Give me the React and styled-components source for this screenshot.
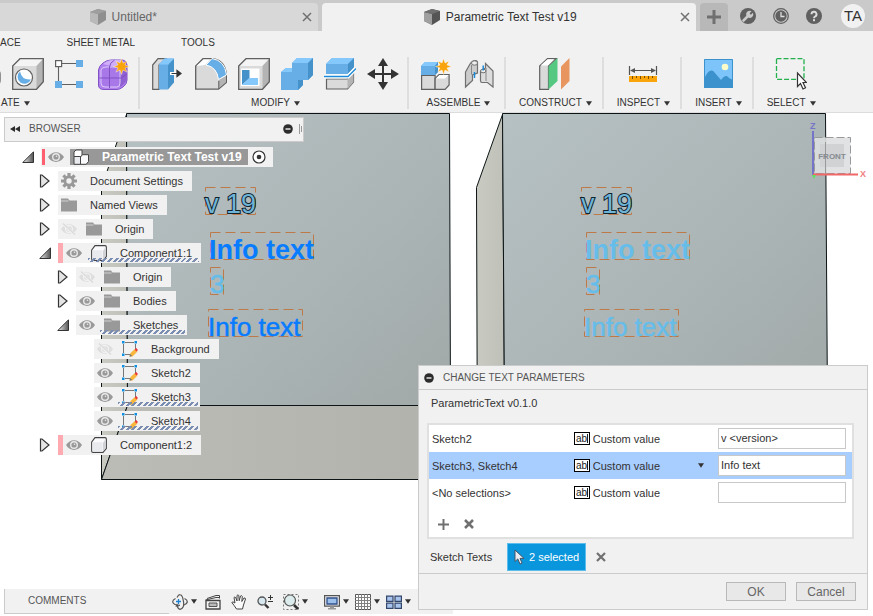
import React from "react";
import styled, { createGlobalStyle } from "styled-components";

const GlobalStyle = createGlobalStyle`
  * { box-sizing: border-box; }
  body {
    margin: 0;
    background: #fff;
    color: #333;
    font-family: "Liberation Sans", Arial, sans-serif;
    font-size: 11px;
    line-height: 16px;
  }
  button, input, select { font: inherit; color: inherit; margin: 0; }
  svg { display: block; flex: none; }
`;

const PlainButton = styled.button`
  display: flex;
  align-items: center;
  justify-content: center;
  padding: 0;
  border: 0;
  background: none;
`;

const Page = styled.div`
  display: flex;
  flex-direction: column;
  min-height: 100vh;
  overflow: hidden;
`;

/* ---------- document tabs ---------- */

const TabBar = styled.header`
  display: flex;
  align-items: stretch;
  height: 31px;
  padding-top: 3px;
  background: #cacaca;
`;

const DocTab = styled.div`
  display: flex;
  align-items: center;
  flex: ${(p) => (p.$active ? "374 1 0" : "318 1 0")};
  min-width: 0;
  margin-right: 4px;
  padding-right: 6px;
  border-radius: ${(p) => (p.$active ? "4px 4px 0 0" : "0 4px 0 0")};
  background: ${(p) => (p.$active ? "#f1f1f1" : "#d8d8d8")};
  color: ${(p) => (p.$active ? "#333" : "#666")};
  font-size: 12px;
`;

const DocTitle = styled.span`
  display: flex;
  flex: 1;
  align-items: center;
  justify-content: center;
  gap: 6px;
  min-width: 0;
  padding-right: ${(p) => (p.$active ? "2px" : "56px")};
  white-space: nowrap;
`;

const AddTab = styled(PlainButton)`
  width: 28px;
  border-radius: 4px 4px 0 0;
  background: #b8b8b8;
`;

const HeaderTools = styled.div`
  display: flex;
  align-items: center;
  gap: 17px;
  height: 25px;
  padding: 0 8px 0 12px;
`;

const Avatar = styled(PlainButton)`
  width: 24px;
  height: 24px;
  margin-left: 2px;
  border-radius: 50%;
  background: #f1f1f1;
  font-size: 15px;
`;

/* ---------- ribbon ---------- */

const Ribbon = styled.section`
  height: 82px;
  background: #f1f1f1;
  border-bottom: 1px solid #dcdcdc;
`;

const RibbonTabs = styled.nav`
  display: flex;
  gap: 46px;
  height: 23px;
`;

const RibbonTab = styled(PlainButton)`
  font-size: 10px;
  white-space: nowrap;
`;

const Groups = styled.div`
  display: flex;
  height: 55px;
  padding-top: 3px;
  margin-left: -43px;
`;

const Group = styled.div`
  display: flex;
  flex: none;
  flex-direction: column;
  align-items: center;
  padding: 1px ${(p) => (p.$single ? "10px 0 13px" : "8px 0 12px")};
  border-right: ${(p) => (p.$last ? "0" : "2px solid #dedede")};
`;

const Tools = styled.div`
  display: flex;
  gap: 11px;
`;

const GroupMenu = styled(PlainButton)`
  gap: 4px;
  height: 14px;
  margin-top: 6px;
  align-self: ${(p) => (p.$first ? "flex-start" : "center")};
  padding-left: ${(p) => (p.$first ? "32px" : "0")};
  font-size: 10px;
  line-height: 14px;
`;

/* ---------- workspace ---------- */

const Workspace = styled.main`
  position: relative;
  display: flex;
  flex: 1;
  flex-direction: column;
  justify-content: space-between;
`;

const SceneLayer = styled.div`
  position: absolute;
  inset: 0;
  overflow: hidden;
`;

const CubeLayer = styled.div`
  position: absolute;
  top: 7px;
  right: 4px;
`;

const Browser = styled.aside`
  position: relative;
  width: 300px;
  margin: 4px 0 0 4px;
`;

const BrowserHead = styled.div`
  display: flex;
  align-items: center;
  height: 25px;
  padding: 0 0 2px 5px;
  border: 1px solid #cbcbcb;
  background: #f1f1f1;
  color: #555;
  font-size: 10px;
`;

const HeadTitle = styled.span`
  flex: 1;
  margin-left: 9px;
`;

const GripSlot = styled.span`
  margin-left: 6px;
`;

const Tree = styled.ul`
  margin: 3px 0 0;
  padding: 0;
  list-style: none;
`;

const TreeRow = styled.li`
  display: flex;
  align-items: center;
  height: 24px;
  padding-left: ${(p) => 15 + p.$depth * 18 - (p.$depth > 0 ? 1 : 0)}px;
`;

const Toggle = styled(PlainButton)`
  width: 22px;
  flex: none;
  justify-content: flex-start;
  padding-left: 3px;
`;

const Pill = styled.div`
  position: relative;
  display: flex;
  align-items: center;
  height: 20px;
  padding: 0 ${(p) => (p.$root ? 7 : 9)}px 0 ${(p) => (p.$strip ? 0 : 3)}px;
  background: #f1f1f1;
  white-space: nowrap;
`;

const Strip = styled.span`
  width: ${(p) => (p.$strong ? 3 : 5)}px;
  height: ${(p) => (p.$strong ? 16 : 20)}px;
  margin: 0 ${(p) => (p.$strong ? "3px 0 1px" : "3px 0 0")};
  background: ${(p) => (p.$strong ? "#ff6070" : "#ffaab0")};
`;

const NodeIcon = styled.span`
  margin-left: ${(p) => (p.$first ? 0 : 9)}px;
`;

const NodeName = styled.span`
  margin-left: 13px;
`;

const RootLabel = styled.span`
  display: flex;
  align-items: center;
  gap: 13px;
  height: 16px;
  margin: 0 4px 0 6px;
  padding: 0 6px 0 3px;
  background: #989898;
  color: #fff;
  font-size: 12px;
  font-weight: bold;
`;

const Hatch = styled.span`
  position: absolute;
  right: 2px;
  bottom: 1px;
  left: ${(p) => p.$left}px;
  height: 4px;
  background: repeating-linear-gradient(135deg, #7c8db2 0 2px, transparent 2px 4px);
`;

/* ---------- bottom bar ---------- */

const BottomBar = styled.footer`
  position: relative;
  display: flex;
  width: 449px;
  height: 25px;
  margin: 0 0 2px 4px;
  background: #f1f1f1;
`;

const Comments = styled(PlainButton)`
  width: 165px;
  padding: 0 0 1px 23px;
  justify-content: flex-start;
  border: 1px solid #cbcbcb;
  border-width: 0 0 1px 1px;
  color: #555;
  font-size: 10px;
`;

const NavTools = styled.div`
  display: flex;
  align-items: center;
  padding-left: 3px;
`;

const NavTool = styled(PlainButton)`
  width: ${(p) => p.$width}px;
  gap: 3px;
  justify-content: flex-start;
`;

/* ---------- dialog ---------- */

const Dialog = styled.form`
  position: absolute;
  right: 5px;
  bottom: 6px;
  width: 450px;
  border: 1px solid #cbcbcb;
  background: #f1f1f1;
`;

const DialogHead = styled.div`
  display: flex;
  align-items: center;
  gap: 9px;
  height: 24px;
  padding-left: 5px;
  border-bottom: 1px solid #cbcbcb;
  color: #555;
  font-size: 10px;
`;

const DialogText = styled.p`
  margin: 0;
  padding: 5px 12px 12px;
`;

const Frame = styled.div`
  margin: 0 13px 0 8px;
  border: 2px solid #e0e0e0;
  background: #fff;
`;

const Params = styled.table`
  width: 100%;
  border-collapse: collapse;
  table-layout: fixed;
`;

const ParamRow = styled.tr`
  height: 27px;
  background: ${(p) => (p.$selected ? "#a8cdff" : "#fff")};
`;

const Cell = styled.td`
  width: ${(p) => p.$width};
  padding: 0 ${(p) => p.$right || 0}px 0 ${(p) => p.$left || 0}px;
`;

const TypeField = styled.label`
  display: flex;
  align-items: center;
  gap: 3px;
`;

const TypeSelect = styled.select`
  flex: 1;
  min-width: 0;
  padding: 0;
  border: 0;
  background: none;
  appearance: none;
`;

const ValueInput = styled.input`
  display: block;
  width: 100%;
  height: 21px;
  padding: 0 2px 2px;
  border: 1px solid #c8c8c8;
  border-radius: 0;
  background: #fff;
`;

const RowActions = styled.div`
  display: flex;
  align-items: center;
  gap: 15px;
  height: 31px;
  padding: 5px 9px 0;
`;

const SelectionLine = styled.div`
  display: flex;
  align-items: center;
  height: 34px;
  padding: 1px 11px 0;
`;

const SelectionLabel = styled.span`
  width: 77px;
`;

const Selection = styled(PlainButton)`
  gap: 4px;
  height: 28px;
  margin-right: 10px;
  padding: 0 6px;
  border: 1px solid #5cbcec;
  background: #0a96dc;
  color: #fff;
`;

const DialogFoot = styled.div`
  display: flex;
  justify-content: flex-end;
  gap: 10px;
  padding: 8px 11px;
  border-top: 1px solid #cbcbcb;
`;

const FootButton = styled.button`
  width: 60px;
  height: 19px;
  padding: 0;
  border: 1px solid #b9b9b9;
  background: #e8e8e8;
  color: #666;
  font-size: 12px;
  line-height: 16px;
`;

/* ---------- small icons ---------- */

const Caret = ({ size = 7 }) => (
  <svg width={size} height="5" viewBox="0 0 7 5"><path d="M0 0h7L3.500 5z" fill="#333" /></svg>
);

const DocIcon = ({ dim }) => (
  <svg width="16" height="16" viewBox="0 0 16 16" opacity={dim ? 0.55 : 1}>
    <path d="M0 3 8 0l8 2v9l-8 5-8-4z" fill="#555" />
    <path d="M0 3 8 5v11l-8-4z" fill="#a0a0a0" />
    <path d="M0 3 8 0l8 2-8 3z" fill="#707070" />
  </svg>
);

const Cross = ({ size = 10, width = 1.5, color = "#707070" }) => (
  <svg width={size} height={size} viewBox="0 0 10 10">
    <path d="M1 1 9 9M9 1 1 9" stroke={color} strokeWidth={width} fill="none" />
  </svg>
);

const Plus = ({ size = 14, width = 3, color = "#707070" }) => (
  <svg width={size} height={size} viewBox="0 0 14 14">
    <path d="M7 0v14M0 7h14" stroke={color} strokeWidth={width} />
  </svg>
);

const Wrench = () => (
  <svg width="16" height="16" viewBox="0 0 16 16">
    <circle cx="8" cy="8" r="8" fill="#606060" />
    <path d="M3.500 12.500 8 8" stroke="#cacaca" strokeWidth="2.600" strokeLinecap="round" />
    <path d="M11.600 3.300 9.800 5.100l.2 1.200 1.200.2 1.700-1.800A3.600 3.600 0 1 1 11.600 3.300z" fill="#cacaca" />
  </svg>
);

const Clock = () => (
  <svg width="16" height="16" viewBox="0 0 16 16">
    <circle cx="8" cy="8" r="7.300" fill="none" stroke="#606060" strokeWidth="1.300" />
    <circle cx="8" cy="8" r="5.700" fill="#606060" />
    <path d="M8 4v4.500h3.500" stroke="#ddd" strokeWidth="1.300" fill="none" />
  </svg>
);

const Help = () => (
  <svg width="16" height="16" viewBox="0 0 16 16">
    <circle cx="8" cy="8" r="8" fill="#606060" />
    <path d="M5.500 6.300a2.500 2.500 0 1 1 3.600 2.200C8.200 9 8 9.200 8 10.200" stroke="#ddd" strokeWidth="1.900" fill="none" />
    <rect x="7" y="11.200" width="2" height="2" fill="#ddd" />
  </svg>
);

const Minus = ({ size = 10 }) => (
  <svg width={size} height={size} viewBox="0 0 10 10">
    <circle cx="5" cy="5" r="4.800" fill="#2c2c2c" />
    <path d="M2.500 5h5" stroke="#fff" strokeWidth="1.300" />
  </svg>
);

const Rewind = () => (
  <svg width="10" height="6" viewBox="0 0 10 6"><path d="M5 0v6L0 3zM10 0v6L5 3z" fill="#2c2c2c" /></svg>
);

const Grip = () => (
  <svg width="4" height="10" viewBox="0 0 4 10"><path d="M.5 0v10M2.500 2v6" stroke="#999" /></svg>
);

const Closed = () => (
  <svg width="11" height="14" viewBox="0 0 11 14">
    <path d="M1.500 1h1.500l7 6-7 6H1.500z" fill="#e4e4e4" stroke="#333" strokeWidth="1.200" />
  </svg>
);

const Opened = () => (
  <svg width="12" height="12" viewBox="0 0 12 12">
    <defs><linearGradient id="opened"><stop offset="0" stopColor="#eee" /><stop offset="1" stopColor="#555" /></linearGradient></defs>
    <path d="M11.500.8v10.700H.8z" fill="url(#opened)" stroke="#333" />
  </svg>
);

const Eye = () => (
  <svg width="16" height="16" viewBox="0 0 16 16">
    <path d="M0 8c4-6.500 12-6.500 16 0-4 6.500-12 6.500-16 0z" fill="#999" />
    <circle cx="8" cy="8" r="3.300" fill="none" stroke="#e8e8e8" strokeWidth="1.400" />
    <circle cx="8.500" cy="7.300" r=".8" fill="#e8e8e8" />
  </svg>
);

const EyeOff = () => (
  <svg width="16" height="16" viewBox="0 0 16 16">
    <path d="M0 8c4-6.500 12-6.500 16 0-4 6.500-12 6.500-16 0z" fill="#dedede" />
    <circle cx="8" cy="8" r="3.500" fill="none" stroke="#f1f1f1" strokeWidth="1.300" />
    <path d="M2 2.500 14 14.500" stroke="#f1f1f1" strokeWidth="3" />
    <path d="M2 2.500 14 13.500" stroke="#dadada" strokeWidth="1.400" />
  </svg>
);

const Folder = () => (
  <svg width="16" height="16" viewBox="0 0 16 16">
    <path d="M0 1.500h7l1.500 2H16v11H0z" fill="#999" />
    <path d="M0 4h7.500" stroke="#d0d0d0" />
  </svg>
);

const Gear = () => (
  <svg width="16" height="16" viewBox="0 0 16 16">
    <g stroke="#999" strokeWidth="3.200">
      <path d="M8 0v16M0 8h16M2.400 2.400l11.200 11.200M13.600 2.400 2.400 13.600" />
    </g>
    <circle cx="8" cy="8" r="5.500" fill="#999" />
    <circle cx="8" cy="8" r="2.700" fill="#f1f1f1" />
  </svg>
);

const Body = () => (
  <svg width="16" height="16" viewBox="0 0 16 16">
    <path d="M.7 5 4 .7h10q1.300 0 1.300 1.300v9.500L12 15.300H2Q.7 15.300.7 14z" fill="#fafafc" stroke="#444" strokeWidth="1.200" />
    <path d="M1.300 5.200H10.500q1 0 1 1v8.500H2.300q-1 0-1-1z" fill="#e8eaee" />
    <path d="M12 6l3-4.500v9.500l-3 3.500z" fill="#d0d2d6" />
  </svg>
);

const Assembly = () => (
  <svg width="16" height="16" viewBox="0 0 16 16">
    <path d="M1 3 3 1h6v5.500l-1 1H1z" fill="#fff" stroke="#444" />
    <path d="M1 7.500h6.500v7.800H1z" fill="#e8eaee" stroke="#444" />
    <path d="M7.500 8l2-2.300h6v6.800l-2.300 2.800H7.500z" fill="#fafafc" stroke="#444" />
  </svg>
);

const Sketch = () => (
  <svg width="16" height="16" viewBox="0 0 16 16">
    <path d="M3 1.500h9M1.500 3v9M13.500 3v6M3 13.500h5" stroke="#777" />
    <path d="M0 0h2.500v2.500H0zM12.500 0H15v2.500h-2.500zM0 12.500h2.500V15H0z" fill="#0e8fdf" />
    <path d="M7.500 15.500 8.500 12l4.500-4 2.500 2.500-5 5z" fill="#f8b63c" />
    <path d="M12.700 8.500 14.300 7 16 9l-1.700 1.500z" fill="#ef3742" />
    <path d="M7.500 15.700 8.200 13l2 2z" fill="#777" />
  </svg>
);

const Radio = () => (
  <svg width="14" height="14" viewBox="0 0 14 14">
    <circle cx="7" cy="7" r="6" fill="#fff" stroke="#333" strokeWidth="1.200" />
    <circle cx="7" cy="7" r="2.300" fill="#333" />
  </svg>
);

const TextBoxIcon = () => (
  <svg width="16" height="13" viewBox="0 0 16 13">
    <rect x=".5" y=".5" width="15" height="12" fill="#fff" stroke="#000" />
    <text x="2" y="10" fontSize="10" fill="#222">ab</text>
    <path d="M13.500 2v9" stroke="#222" />
  </svg>
);

const Pointer = () => (
  <svg width="11" height="16" viewBox="0 0 11 16">
    <path d="M1 1v11.500l2.800-2.600L6 15l2-.9-2-4.700h4z" fill="#e8eef4" stroke="#456" />
  </svg>
);

/* ---------- ribbon icons ---------- */

const G = "#dadada";
const L = "#f4f4f4";
const D = "#b4b4b4";
const S = "#606060";
const B = "#67aee6";
const BL = "#85c8fc";
const BD = "#4592cb";

const R = ({ children }) => <svg width="32" height="32" viewBox="0 0 32 32">{children}</svg>;

const Block = () => (
  <>
    <path d="M.7 8 8 .7h23.300v23L24.500 31.300H.7z" fill={G} />
    <path d="M.7 8 8 .7h23.300L24.500 8z" fill={L} />
    <path d="M24.500 8l6.800-7.300v23l-6.800 7.600z" fill={D} />
    <path d="M.7 8 8 .7h23.300v23L24.500 31.300H.7z" fill="none" stroke={S} strokeWidth="1.300" />
  </>
);

const Star = ({ x, y }) => (
  <path
    transform={`translate(${x} ${y})`}
    d="M0-8 1.600-3.400 5.600-5.600 3.500-1.500 8 0 3.500 1.500 5.600 5.600 1.500 3.500 0 8-1.500 3.500-5.600 5.600-3.500 1.500-8 0-3.500-1.500-5.600-5.600-1.500-3.500z"
    fill="#f9a40a" stroke="#fff" strokeWidth=".4"
  />
);

const HoleIcon = () => (
  <R>
    <Block />
    <circle cx="12" cy="19.500" r="8.500" fill="#fff" stroke={S} strokeWidth="1.200" />
    <path d="M8 13.500a7 7 0 1 0 11 8Q10 22.500 8 13.500z" fill={B} />
  </R>
);
const ExtrudeIcon = () => (
  <R>
    <path d="M0 12h27q4 0 4 4v6q0 5-4 5H0z" fill={D} stroke={S} strokeWidth="1.300" />
  </R>
);
const PatternIcon = () => (
  <R>
    <path d="M7 5.500h14M3.500 9v14M7 26.500h14" stroke={S} strokeWidth="1.100" />
    <rect x=".6" y="2.600" width="6" height="6" fill="#fff" stroke={S} strokeWidth="1.200" />
    <path d="M21 2h7v7h-7zM0 23h7v7H0zM21 23h7v7h-7z" fill={B} />
  </R>
);
const FormIcon = () => (
  <R>
    <path d="M.5 12Q1 8 5 5t8-3h12q4 1 4 5v15q0 4-4 7t-7 2.500H6Q.5 31.500.5 27z" fill="#b182ee" stroke="#8150c4" />
    <path d="M5 6q5-4 9-4h10q-2 5-9 6.500z" fill="#cfaef8" />
    <path d="M22 10q5-1 7-5v16q-2 5-7 8z" fill="#8f60d2" />
    <path d="M3 12q1-3 5-3h11q3 0 3 4v12q0 4-3 4H7q-4 0-4-4z" fill="#a878e8" stroke="#dcc8fa" />
    <path d="M11.500 9v21M1.500 20H23l6-4M11.500 9q0-4 5-7" stroke="#8150c4" fill="none" />
    <Star x={23.500} y={8.500} />
  </R>
);
const PressPullIcon = () => (
  <R>
    <path d="M.7 7 6 .7h8L7 7v24.300H.7z" fill={G} stroke={S} strokeWidth="1.200" />
    <path d="M7 6.500 12.500.5H22L16 6.500v25H7z" fill={B} />
    <path d="M16 6.500 22 .5v24l-6 7z" fill={BD} />
    <path d="M7 6.500 12.500.5H22L16 6.500z" fill={BL} />
    <path d="M18 15.500h9" stroke="#fff" strokeWidth="3" />
    <path d="M19.500 15.500H26M25 12.500l4 3-4 3z" stroke="#333" strokeWidth="1.200" fill="#333" />
  </R>
);
const FilletIcon = () => (
  <R>
    <path d="M.7 8 8 .7H18q13 2 13.500 18v5.500l-8 7H.7z" fill={G} stroke={S} strokeWidth="1.300" />
    <path d="M1.500 8 8.500 1.500H15L10 7z" fill="#fff" />
    <path d="M23.500 22l7.500-4v6l-7.500 6.500z" fill={D} />
    <path d="M11 7 17 .5q13 2 14.500 16.500l-8 4.500Q22 9 11 7z" fill={B} stroke="#fff" />
    <path d="M23.800 23v8" fill="none" stroke={S} />
  </R>
);
const ShellIcon = () => (
  <R>
    <Block />
    <path d="M3 10.500h18.500v17.500H3z" fill="#fff" />
    <path d="M4 12h7.500v8L4 27z" fill={BD} />
    <path d="M4 27l7.500-7H20v7z" fill={BL} />
  </R>
);
const CombineIcon = () => (
  <R>
    <path d="M0 14 5 10h6V5l5-5h16v17l-5 5h-5v5l-5 5H0z" fill={B} />
    <path d="M11 5l5-5h16l-5 5zM0 14l5-4h6v4z" fill={BL} />
    <path d="M27 5l5-5v17l-5 5zM17 22h5v5l-5 5z" fill={BD} />
  </R>
);
const SplitIcon = () => (
  <R>
    <path d="M2 6 8 0h22v9l-6 7H2z" fill={B} />
    <path d="M2 6 8 0h22l-6 6z" fill={BL} />
    <path d="M24 6l6-6v9l-6 7z" fill={BD} />
    <path d="M2.500 21h21l6-7v10l-6 7h-21z" fill={G} stroke={S} strokeWidth="1.200" />
    <path d="M23.500 21l6-6v9l-6 7z" fill={D} />
    <path d="M0 18.500h24l8-8" stroke="#fff" strokeWidth="4" fill="none" />
    <path d="M0 18.500h24l8-8" stroke="#1c8ad8" strokeWidth="1.300" fill="none" />
  </R>
);
const MoveIcon = () => (
  <R>
    <path d="M16 4v24M4 16h24" stroke="#333" strokeWidth="2" />
    <path d="M16 0l5 8H11zM16 32l5-8H11zM0 16l8-5v10zM32 16l-8-5v10z" fill="#333" />
  </R>
);
const NewComponentIcon = () => (
  <R>
    <path d="M0 8l4-4h13v10l-3 3H0z" fill={B} />
    <path d="M0 8l4-4h13l-3 4z" fill={BL} />
    <path d="M14 8l3-4v10l-3 3z" fill={BD} />
    <path d="M.6 17.500h13.500v13.800H.6z" fill={G} stroke={S} strokeWidth="1.200" />
    <path d="M14.100 20.500l4-4h10v10.500l-4 4.300h-10z" fill={G} stroke={S} strokeWidth="1.200" />
    <path d="M14.800 20.500l3.700-3.500h9l-3.500 3.500z" fill="#fff" />
    <Star x={22.500} y={8.500} />
  </R>
);
const JointIcon = () => (
  <R>
    <path d="M1.500 14 6 6q2-3.500 5.500-3.500 2 0 2 2V15l-5 2v5.500l-7 6.500z" fill="#ccc" stroke="#707070" strokeWidth="1.200" />
    <path d="M7.500 7v9.500" stroke="#888" fill="none" />
    <ellipse cx="10.500" cy="5" rx="3" ry="2.200" fill="#eee" stroke="#707070" />
    <path d="M29 29 23.500 24.500H18q-1.500 0-1.500-2V13l5-3V5.500L29 13z" fill="#ddd" stroke="#707070" strokeWidth="1.200" />
    <path d="M22 10v13" stroke="#888" />
    <ellipse cx="19.200" cy="13" rx="2.700" ry="1.800" fill="#eee" stroke="#707070" />
    <path d="M10.500 14v6M19.200 7.500v5" stroke="#1c8ad8" strokeWidth="1.500" />
  </R>
);
const PlaneIcon = () => (
  <R>
    <path d="M.7 8 8.500.7h8.800L9.500 8v23.300H.7z" fill={G} stroke={S} strokeWidth="1.200" />
    <path d="M1.500 7.500 8.500 1.300H15L9 7.500z" fill="#fff" />
    <path d="M9.500 8.500 18.500 0v23l-9 8.500z" fill="#55c882" />
    <path d="M22 8.500 30.500 0v23L22 31.500z" fill="#e8955f" />
  </R>
);
const MeasureIcon = () => (
  <R>
    <path d="M2.500 8v9M29.500 8v9M4 12.500h24" stroke="#555" strokeWidth="1.200" />
    <path d="M3 12.500l5-2.500v5zM29 12.500l-5-2.500v5z" fill="#555" />
    <path d="M2 18h28v6H2z" fill="#f9a40a" />
    <path d="M5.500 18v3M9.500 18v2M13.500 18v3M17.500 18v2M21.500 18v3M25.500 18v2" stroke="#7a5000" />
  </R>
);
const ImageIcon = () => (
  <R>
    <path d="M2 1h29v29H2z" fill="#7cc4fa" />
    <circle cx="23" cy="9" r="3.300" fill="#fdfcc8" />
    <path d="M2 21Q8 8 13 15l6 7q5-7 8-2l4 2v8H2z" fill="#3c92cc" />
    <path d="M2.500 1.500h28v28h-28z" fill="none" stroke="#3c92cc" />
  </R>
);
const SelectIcon = () => (
  <R>
    <path d="M1.500.7H29v20.600H1.500z" fill="none" stroke="#22b14c" strokeWidth="1.300" strokeDasharray="5 2" />
    <path d="M22.500 15v13.500l3-3 2.500 5.500 2.500-1.200-2.500-5.300h3.500z" fill="#fff" stroke="#333" strokeWidth="1.200" />
  </R>
);

/* ---------- navigation icons ---------- */

const N = ({ children }) => <svg width="16" height="16" viewBox="0 0 16 16">{children}</svg>;

const Orbit = () => (
  <N>
    <path d="M3.500 4.500Q.5 6 .7 8q.5 3 7.300 3.300M12.500 4.500q3 1.500 2.800 3.500-.6 2.300-3.300 3" fill="none" stroke="#555" strokeWidth="1.200" />
    <path d="M5 3.500Q6.500.6 8 .7q2.500 0 3.500 7T8 15.300Q6 15 5 11.500" fill="none" stroke="#555" strokeWidth="1.200" />
    <path d="M3.300 12.500 5 9.500l2 3z" fill="#555" />
    <path d="M6.500 5v5M4 7.500h5" stroke="#1c7fd0" strokeWidth="1.300" />
  </N>
);
const LookAt = () => (
  <N>
    <path d="M1 6.500h14v8.500H1z" fill="#f4f4f4" stroke="#444" strokeWidth="1.300" />
    <path d="M4 9h8v3.500H4z" fill="#bbb" stroke="#555" />
    <path d="M.5 6 11 3.500H14M2 4.500 11 1.500h3.500v3" stroke="#444" fill="none" />
  </N>
);
const Hand = () => (
  <N>
    <path d="M5.500 15Q3 11 .8 8.500 1.500 7 4 9L3 3.500q1-1.300 1.800.3L6 7V1.500q1-1.300 1.800 0l.4 5.200L9.500 2q1.300-1 1.800.4L10.800 7.500 13 4q1.300-.4 1.500 1L12.500 11 11.500 15z" fill="#fafafa" stroke="#444" />
  </N>
);
const Zoom = () => (
  <N>
    <circle cx="5" cy="7" r="4" fill="#d8e8f0" stroke="#555" strokeWidth="1.300" />
    <path d="M8 10.500l3.500 3.500" stroke="#333" strokeWidth="2.400" />
    <path d="M13.500 1v5M11 3.500h5M11 7.500h5" stroke="#333" />
  </N>
);
const ZoomWindow = () => (
  <N>
    <path d="M.5.500h15v15H.500z" fill="none" stroke="#777" strokeDasharray="2 2" />
    <circle cx="7" cy="6.500" r="5.500" fill="#dcecec" stroke="#555" strokeWidth="1.200" />
    <path d="M11 11l4 4" stroke="#333" strokeWidth="2.600" />
  </N>
);
const Display = () => (
  <N>
    <path d="M.6 1.600h14.800v10.500H.6z" fill="#eee" stroke="#555" strokeWidth="1.200" />
    <path d="M3 4h10v6H3z" fill="#9cc0ea" stroke="#2f4f8c" strokeWidth="1.300" />
    <path d="M6 12.500h4v1.500H6zM4 14h8v1.500H4z" fill="#999" />
  </N>
);
const Grid = () => (
  <N>
    <path d="M.5.500h15v15H.500z" fill="#fff" stroke="#555" />
    <path d="M3.500 0v16M6.500 0v16M9.500 0v16M12.500 0v16M0 3.500h16M0 6.500h16M0 9.500h16M0 12.500h16" stroke="#808080" />
  </N>
);
const Views = () => (
  <N>
    <path d="M.6 2.100h6.400v5.300H.6zM9 2.100h6.400v5.300H9zM.6 9.100h6.400v5.300H.6zM9 9.100h6.400v5.300H9z" fill="#a8c4ec" stroke="#33466c" strokeWidth="1.200" />
  </N>
);

/* ---------- 3D scene ---------- */

const SketchSet = ({ x, selected }) => {
  const color = selected ? "#087cff" : "#66bde9";
  return (
    <g transform={`translate(${x} 0)`} fontFamily="Liberation Sans, Arial, sans-serif">
      <g fill="none" stroke="#bd7a48" strokeDasharray="10 5">
        <path d="M205.500 187.500h50v27h-50zM210.500 232.500h103v27h-103zM210.500 267.500h13v27h-13zM208.500 309.500h94v27h-94z" />
      </g>
      <text x="205" y="213" fontSize="27" fill="#6fb4d6" stroke="#10222c" strokeWidth="2" paintOrder="stroke">v 19</text>
      <text x="209" y="259" fontSize="27" fontWeight="bold" fill={color}>Info text</text>
      <text x="210" y="293" fontSize="26" fill="#66bde9" stroke="#66bde9" strokeWidth=".5">3</text>
      <text x="208" y="336" fontSize="26" fill={color} stroke={color} strokeWidth=".5">Info text</text>
    </g>
  );
};

const Scene = () => (
  <svg width="100%" height="100%" viewBox="0 113 873 503" preserveAspectRatio="xMinYMin slice">
    <defs>
      <linearGradient id="face" x1="0" y1="0" x2="1" y2="1">
        <stop offset="0" stopColor="#b6c1c3" />
        <stop offset=".6" stopColor="#abb4b5" />
        <stop offset="1" stopColor="#a0a9a7" />
      </linearGradient>
      <linearGradient id="side"><stop offset="0" stopColor="#c9cac1" /><stop offset="1" stopColor="#bfc1b8" /></linearGradient>
      <linearGradient id="under"><stop offset="0" stopColor="#bbbcb6" /><stop offset="1" stopColor="#b1b2ab" /></linearGradient>
    </defs>
    <g stroke="#0c1416">
      <path d="M126.500 114.500 101.500 187.500V479.500L127.500 405.500z" fill="url(#side)" />
      <path d="M101.500 479.500 127.500 405.500H450.500V479.500z" fill="url(#under)" />
      <path d="M126.500 113.500H449.500L450.500 405.500H127.500z" fill="url(#face)" />
      <path d="M502.500 114.500 476.500 187.500 477.500 479.500 504.500 405.500z" fill="url(#side)" />
      <path d="M502.500 113.500H825.500L827.500 405.500H504.500z" fill="url(#face)" />
    </g>
    <SketchSet x={0} selected />
    <SketchSet x={376} />
  </svg>
);

const ViewCube = () => (
  <svg width="60" height="62" viewBox="809 120 60 62" fontFamily="Liberation Sans, Arial, sans-serif">
    <path d="M814.500 137.500h36v36h-36z" fill="#dddfe0" fillOpacity=".9" stroke="#999" strokeDasharray="8 3" />
    <path d="M820 144h24v23h-24z" fill="#d0d2d4" />
    <path d="M825.500 142v33" stroke="#999" />
    <path d="M813 131v44" stroke="#7474c8" strokeWidth="2" />
    <path d="M813 174.500h45" stroke="#f06868" strokeWidth="2" />
    <path d="M812 175h4l-2 4z" fill="#60e060" />
    <text x="810" y="129" fontSize="9" fontWeight="bold" fill="#7474c8">Z</text>
    <text x="860" y="177" fontSize="9" fontWeight="bold" fill="#f08080">X</text>
    <text x="832" y="159" fontSize="8" fontWeight="bold" textAnchor="middle" fill="#858a90">FRONT</text>
  </svg>
);

/* ---------- data ---------- */

const groups = [
  { name: "ATE", icons: [ExtrudeIcon, HoleIcon, PatternIcon, FormIcon] },
  { name: "MODIFY", icons: [PressPullIcon, FilletIcon, ShellIcon, CombineIcon, SplitIcon, MoveIcon] },
  { name: "ASSEMBLE", icons: [NewComponentIcon, JointIcon] },
  { name: "CONSTRUCT", icons: [PlaneIcon] },
  { name: "INSPECT", icons: [MeasureIcon] },
  { name: "INSERT", icons: [ImageIcon] },
  { name: "SELECT", icons: [SelectIcon] },
];

const nodes = [
  { name: "Document Settings", depth: 1, toggle: "closed", icon: Gear },
  { name: "Named Views", depth: 1, toggle: "closed", icon: Folder },
  { name: "Origin", depth: 1, toggle: "closed", eye: "off", icon: Folder },
  { name: "Component1:1", depth: 1, toggle: "open", eye: "on", icon: Body, strip: true, hatch: 30 },
  { name: "Origin", depth: 2, toggle: "closed", eye: "off", icon: Folder },
  { name: "Bodies", depth: 2, toggle: "closed", eye: "on", icon: Folder },
  { name: "Sketches", depth: 2, toggle: "open", eye: "on", icon: Folder, hatch: 24 },
  { name: "Background", depth: 3, eye: "off", icon: Sketch },
  { name: "Sketch2", depth: 3, eye: "on", icon: Sketch },
  { name: "Sketch3", depth: 3, eye: "on", icon: Sketch, hatch: 24 },
  { name: "Sketch4", depth: 3, eye: "on", icon: Sketch, hatch: 24 },
  { name: "Component1:2", depth: 1, toggle: "closed", eye: "on", icon: Body, strip: true },
];

const navTools = [
  { name: "Orbit", icon: Orbit, width: 33, menu: true },
  { name: "Look at", icon: LookAt, width: 26 },
  { name: "Pan", icon: Hand, width: 26 },
  { name: "Zoom", icon: Zoom, width: 26 },
  { name: "Zoom window", icon: ZoomWindow, width: 41, menu: true },
  { name: "Display settings", icon: Display, width: 31, menu: true },
  { name: "Grid", icon: Grid, width: 31, menu: true },
  { name: "Viewports", icon: Views, width: 31, menu: true },
];

const params = [
  { target: "Sketch2", value: "v <version>" },
  { target: "Sketch3, Sketch4", value: "Info text", selected: true },
  { target: "<No selections>", value: "" },
];

const TreeNode = ({ node }) => {
  const Icon = node.icon;
  return (
    <TreeRow $depth={node.depth}>
      {node.toggle ? (
        <Toggle type="button" aria-label={`Toggle ${node.name}`}>
          {node.toggle === "open" ? <Opened /> : <Closed />}
        </Toggle>
      ) : <Toggle as="span" />}
      <Pill $strip={node.strip}>
        {node.strip && <Strip />}
        {node.eye && (
          <PlainButton type="button" aria-label={`Visibility of ${node.name}`}>
            {node.eye === "on" ? <Eye /> : <EyeOff />}
          </PlainButton>
        )}
        <NodeIcon $first={!node.eye}><Icon /></NodeIcon>
        <NodeName>{node.name}</NodeName>
        {node.hatch && <Hatch $left={node.hatch} />}
      </Pill>
    </TreeRow>
  );
};

export default function App() {
  return (
    <Page>
      <GlobalStyle />
      <TabBar>
        <DocTab>
          <DocTitle><DocIcon dim />Untitled*</DocTitle>
          <PlainButton type="button" aria-label="Close Untitled"><Cross /></PlainButton>
        </DocTab>
        <DocTab $active>
          <DocTitle $active><DocIcon />Parametric Text Test v19</DocTitle>
          <PlainButton type="button" aria-label="Close Parametric Text Test"><Cross /></PlainButton>
        </DocTab>
        <AddTab type="button" aria-label="New tab"><Plus /></AddTab>
        <HeaderTools>
          <PlainButton type="button" aria-label="Extensions"><Wrench /></PlainButton>
          <PlainButton type="button" aria-label="Job status"><Clock /></PlainButton>
          <PlainButton type="button" aria-label="Help"><Help /></PlainButton>
          <Avatar type="button">TA</Avatar>
        </HeaderTools>
      </TabBar>

      <Ribbon>
        <RibbonTabs>
          <RibbonTab type="button">ACE</RibbonTab>
          <RibbonTab type="button">SHEET METAL</RibbonTab>
          <RibbonTab type="button">TOOLS</RibbonTab>
        </RibbonTabs>
        <Groups>
          {groups.map((group, g) => (
            <Group key={group.name} $single={group.icons.length === 1} $last={g === groups.length - 1}>
              <Tools>
                {group.icons.map((Icon, i) => (
                  <PlainButton key={i} type="button" aria-label={`${group.name} tool ${i + 1}`}><Icon /></PlainButton>
                ))}
              </Tools>
              <GroupMenu type="button" $first={g === 0}>{group.name}<Caret size={6} /></GroupMenu>
            </Group>
          ))}
        </Groups>
      </Ribbon>

      <Workspace>
        <SceneLayer><Scene /></SceneLayer>
        <CubeLayer><ViewCube /></CubeLayer>

        <Browser>
          <BrowserHead>
            <Rewind />
            <HeadTitle>BROWSER</HeadTitle>
            <PlainButton type="button" aria-label="Collapse browser"><Minus /></PlainButton>
            <GripSlot><Grip /></GripSlot>
          </BrowserHead>
          <Tree>
            <TreeRow $depth={0}>
              <Toggle type="button" aria-label="Toggle root"><Opened /></Toggle>
              <Pill $strip $root>
                <Strip $strong />
                <PlainButton type="button" aria-label="Visibility of root"><Eye /></PlainButton>
                <RootLabel><Assembly />Parametric Text Test v19</RootLabel>
                <PlainButton type="button" aria-label="Activate root"><Radio /></PlainButton>
              </Pill>
            </TreeRow>
            {nodes.map((node, i) => <TreeNode key={i} node={node} />)}
          </Tree>
        </Browser>

        <BottomBar>
          <Comments type="button">COMMENTS</Comments>
          <NavTools>
            {navTools.map(({ name, icon: Icon, width, menu }) => (
              <NavTool key={name} type="button" aria-label={name} $width={width}>
                <Icon />{menu && <Caret size={6} />}
              </NavTool>
            ))}
          </NavTools>
        </BottomBar>

        <Dialog onSubmit={(e) => e.preventDefault()}>
          <DialogHead><Minus />CHANGE TEXT PARAMETERS</DialogHead>
          <DialogText>ParametricText v0.1.0</DialogText>
          <Frame>
            <Params>
              <tbody>
                {params.map((row) => (
                  <ParamRow key={row.target} $selected={row.selected}>
                    <Cell $width="34%" $left={3}>{row.target}</Cell>
                    <Cell $left={1} $right={14}>
                      <TypeField>
                        <TextBoxIcon />
                        <TypeSelect aria-label={`Type for ${row.target}`} defaultValue="Custom value">
                          <option>Custom value</option>
                        </TypeSelect>
                        {row.selected && <Caret size={6} />}
                      </TypeField>
                    </Cell>
                    <Cell $width="134px" $right={6}>
                      <ValueInput aria-label={`Value for ${row.target}`} defaultValue={row.value} />
                    </Cell>
                  </ParamRow>
                ))}
              </tbody>
            </Params>
            <RowActions>
              <PlainButton type="button" aria-label="Add row"><Plus size={11} width={2.5} /></PlainButton>
              <PlainButton type="button" aria-label="Remove row"><Cross width={2.5} /></PlainButton>
            </RowActions>
          </Frame>
          <SelectionLine>
            <SelectionLabel>Sketch Texts</SelectionLabel>
            <Selection type="button"><Pointer />2 selected</Selection>
            <PlainButton type="button" aria-label="Clear selection"><Cross width={2.2} /></PlainButton>
          </SelectionLine>
          <DialogFoot>
            <FootButton type="submit">OK</FootButton>
            <FootButton type="button">Cancel</FootButton>
          </DialogFoot>
        </Dialog>
      </Workspace>
    </Page>
  );
}
